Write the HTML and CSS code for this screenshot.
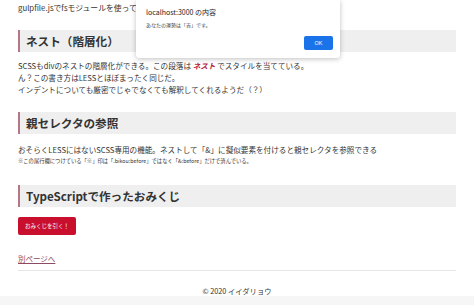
FILE: index.html
```html
<!DOCTYPE html>
<html lang="ja">

<head>
    <meta charset="UTF-8">
    <meta name="viewport" content="width=device-width, initial-scale=1.0">
    <title>SCSSの練習</title>
    <link rel="stylesheet" href="styles.css">
</head>

<body>
    <div class="Main">
        <p class="Lead">gulpfile.jsでfsモジュールを使って読</p>

        <h2 class="Title">ネスト（階層化）</h2>
        <p class="Text">
            SCSSもdivのネストの階層化ができる。この段落は <strong class="Nest">ネスト</strong> でスタイルを当てている。<br>
            ん？この書き方はLESSとほぼまったく同じだ。<br>
            インデントについても厳密でじゃでなくても解釈してくれるようだ（？）
        </p>

        <h2 class="Title">親セレクタの参照</h2>
        <p class="Text Parent">おそらくLESSにはないSCSS専用の機能。ネストして「&amp;」に擬似要素を付けると親セレクタを参照できる</p>
        <p class="Biko">※この尾行欄につけている「※」印は「.bikou:before」ではなく「&amp;:before」だけで済んでいる。</p>

        <h2 class="Title Omikuji">TypeScriptで作ったおみくじ</h2>
        <button class="OmikujiBtn" onclick="Draw()">おみくじを引く！</button>

        <a class="NextLink" href="#">別ページへ</a>
        <hr class="Line">
    </div>
    <footer class="Foot">© 2020 イイダリョウ</footer>
    <div class="Bottom"></div>

    <div class="AlertBox">
        <div class="AlertTitle">localhost:3000 の内容</div>
        <div class="AlertMsg">あなたの運勢は「吉」です。</div>
        <div class="AlertBtns">
            <button class="AlertOk">OK</button>
        </div>
    </div>
    <script>
        function Draw() {
            const list = ["大吉", "吉", "中吉", "小吉", "凶"];
            const res = list[Math.floor(Math.random() * list.length)];
            document.querySelector('.AlertMsg').textContent = "あなたの運勢は「" + res + "」です。";
            document.querySelector('.AlertBox').style.display = "block";
        }
        document.querySelector('.AlertOk').addEventListener('click', () => {
            document.querySelector('.AlertBox').style.display = "none";
        });
    </script>
</body>

</html>
```

FILE: styles.css
```css
* {
    box-sizing: border-box;
}

body {
    margin: 0;
    font-family: "Noto Sans CJK JP", "Noto Sans", sans-serif;
    color: #333;
    background-color: #fff;
}

.Main {
    padding: 2px 18px 0;
    font-size: 7.6px;
    line-height: 12px;
}

.Lead {
    margin: 0;
    font-size: 7.8px;
    line-height: 12px;
    white-space: nowrap;
}

.Title {
    margin: 16px 0 0;
    height: 22px;
    line-height: 22px;
    padding-left: 6px;
    font-size: 11.6px;
    font-weight: bold;
    color: #333;
    background-color: #efefef;
    border-left: 2px solid #b57786;
}

.Text {
    margin: 8px 0 0;
    font-size: 7.6px;
    line-height: 12px;
}

.Nest {
    color: #b8133a;
    font-style: italic;
}

.Text.Parent {
    margin-top: 10px;
}

.Biko {
    margin: 1px 0 0;
    font-size: 5.3px;
    line-height: 8px;
}

.Title.Omikuji {
    margin-top: 20px;
}

.OmikujiBtn {
    display: block;
    margin-top: 10px;
    width: 58px;
    height: 18px;
    padding: 0;
    border: none;
    border-radius: 2px;
    background-color: #c8102e;
    color: #fff;
    font-family: inherit;
    font-size: 5.5px;
    cursor: pointer;
}

.NextLink {
    display: inline-block;
    margin-top: 18px;
    font-size: 7.5px;
    line-height: 12px;
    color: #8c4a63;
    vertical-align: top;
}

.Line {
    margin: 5px 0 0;
    border: none;
    border-top: 1px solid #e6e6e6;
}

.Foot {
    margin-top: 15px;
    text-align: center;
    font-size: 7.3px;
    line-height: 10px;
}

.Bottom {
    height: 10px;
    background-color: #f6f6f6;
}

.AlertBox {
    position: absolute;
    left: 136px;
    top: 0;
    width: 204px;
    height: 58px;
    padding: 8px 7px 0 10px;
    background-color: #fff;
    border-radius: 0 0 3px 3px;
    box-shadow: 0 1px 5px rgba(0, 0, 0, 0.25);
}

.AlertTitle {
    font-size: 7px;
    line-height: 9px;
    color: #202124;
}

.AlertMsg {
    margin-top: 4px;
    font-size: 5px;
    line-height: 8px;
    color: #3c4043;
}

.AlertBtns {
    display: flex;
    justify-content: flex-end;
    margin-top: 7px;
}

.AlertOk {
    width: 29px;
    height: 14px;
    padding: 0;
    border: none;
    border-radius: 2px;
    background-color: #1a73e8;
    color: #fff;
    font-family: "Liberation Sans", sans-serif;
    font-size: 5.5px;
}
```
